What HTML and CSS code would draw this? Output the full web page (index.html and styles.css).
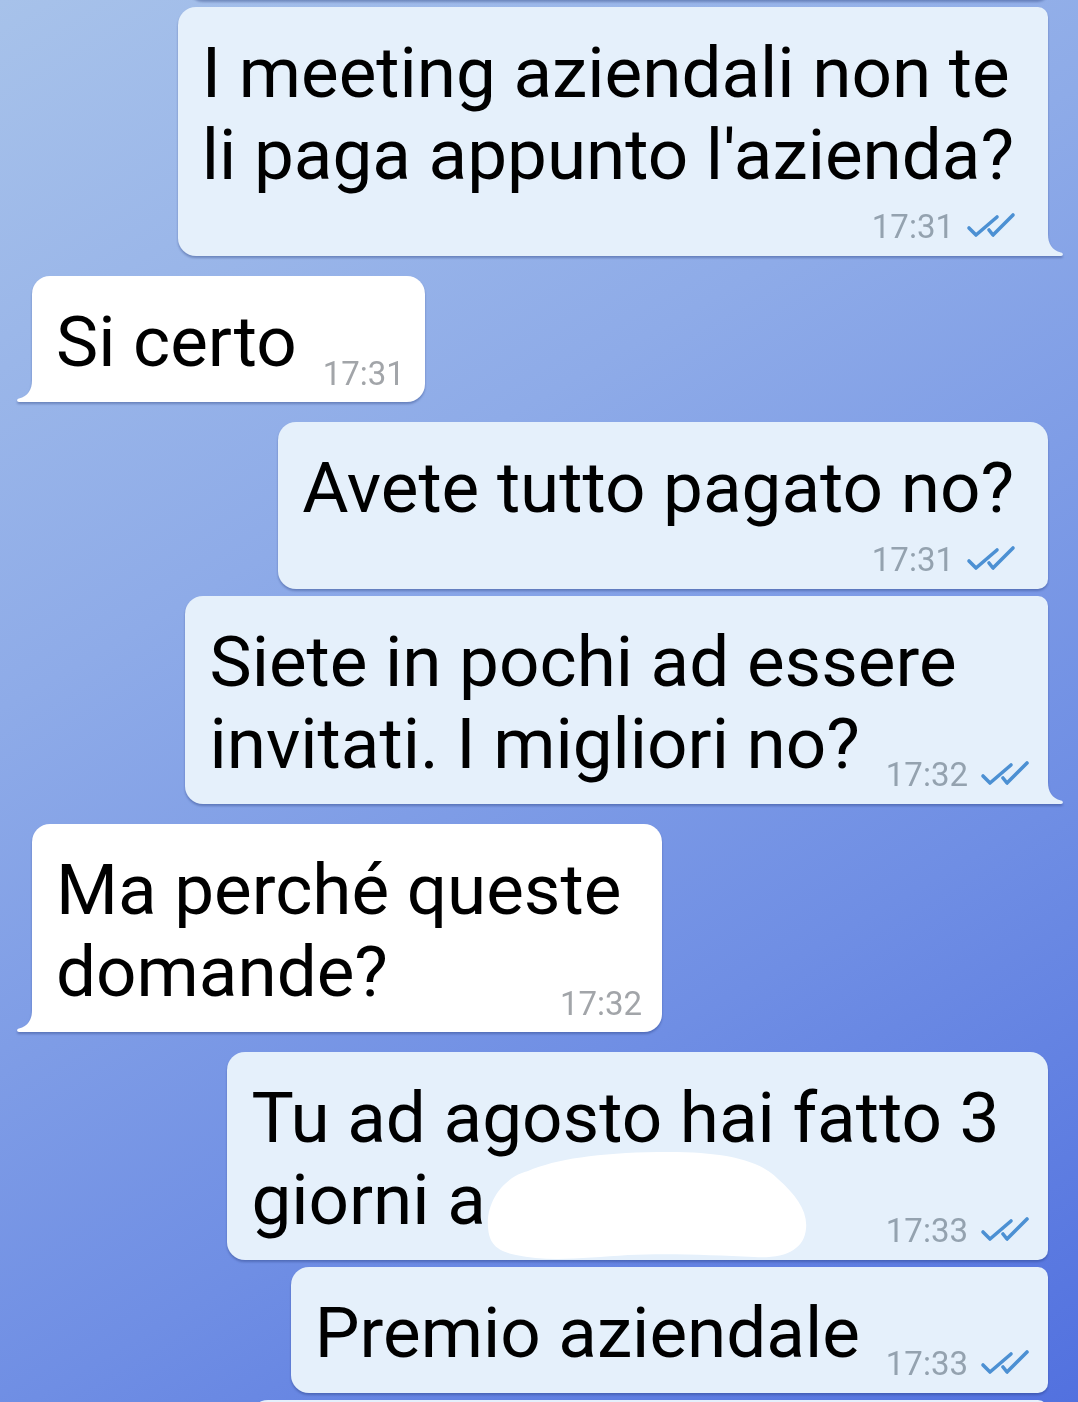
FILE: index.html
```html
<!DOCTYPE html>
<html lang="it">
<head>
    <meta charset="UTF-8">
    <meta name="viewport" content="width=device-width, initial-scale=1.0">
    <title>Chat</title>
    <link rel="stylesheet" href="styles.css">
</head>
<body>
    <div class="chat">
        <!-- messaggio precedente, tagliato in alto -->
        <div class="msg out first">
            <div class="bubble stub-top join-bottom"></div>
        </div>

        <div class="msg out cont">
            <div class="bubble meta-below join-top tail">
                <div class="line">I meeting aziendali non te</div>
                <div class="line">li paga appunto l'azienda?</div>
                <div class="meta-row">
                    <span class="meta"><span class="time">17:31</span><svg class="checks" viewBox="0 0 50 30" width="50" height="30"><path d="M3 20 L10 27 L31 9"/><path d="M23 22 L27 27 L47 7"/></svg></span>
                </div>
                <svg class="tail-shape" viewBox="-2 0 18 22" width="18" height="22"><path d="M-2 0 L0 0 C0 10 4 16 13 18.6 C15.6 19.3 15.4 22 13 22 L-2 22 Z"/></svg>
            </div>
        </div>

        <div class="msg in">
            <div class="bubble tail">
                <div class="row">
                    <span class="line">Si certo</span>
                    <span class="meta"><span class="time">17:31</span></span>
                </div>
                <svg class="tail-shape" viewBox="-2 0 18 22" width="18" height="22"><path d="M-2 0 L0 0 C0 10 4 16 13 18.6 C15.6 19.3 15.4 22 13 22 L-2 22 Z"/></svg>
            </div>
        </div>

        <div class="msg out">
            <div class="bubble meta-below join-bottom">
                <div class="line">Avete tutto pagato no?</div>
                <div class="meta-row">
                    <span class="meta"><span class="time">17:31</span><svg class="checks" viewBox="0 0 50 30" width="50" height="30"><path d="M3 20 L10 27 L31 9"/><path d="M23 22 L27 27 L47 7"/></svg></span>
                </div>
            </div>
        </div>

        <div class="msg out cont">
            <div class="bubble join-top tail">
                <div class="line">Siete in pochi ad essere</div>
                <div class="row">
                    <span class="line">invitati. I migliori no?</span>
                    <span class="meta"><span class="time">17:32</span><svg class="checks" viewBox="0 0 50 30" width="50" height="30"><path d="M3 20 L10 27 L31 9"/><path d="M23 22 L27 27 L47 7"/></svg></span>
                </div>
                <svg class="tail-shape" viewBox="-2 0 18 22" width="18" height="22"><path d="M-2 0 L0 0 C0 10 4 16 13 18.6 C15.6 19.3 15.4 22 13 22 L-2 22 Z"/></svg>
            </div>
        </div>

        <div class="msg in">
            <div class="bubble tail wide">
                <div class="line">Ma perché queste</div>
                <div class="row">
                    <span class="line">domande?</span>
                    <span class="meta"><span class="time">17:32</span></span>
                </div>
                <svg class="tail-shape" viewBox="-2 0 18 22" width="18" height="22"><path d="M-2 0 L0 0 C0 10 4 16 13 18.6 C15.6 19.3 15.4 22 13 22 L-2 22 Z"/></svg>
            </div>
        </div>

        <div class="msg out">
            <div class="bubble join-bottom">
                <div class="line">Tu ad agosto hai fatto 3</div>
                <div class="row">
                    <span class="line">giorni a<svg class="blob" viewBox="0 0 322 112" width="322" height="112"><path d="M2 78 C0 52 18 28 42 22 C70 10 112 4 172 3 C232 2 272 9 292 30 C310 46 322 62 320 80 C318 100 300 110 268 108 C228 106 182 104 142 106 C100 109 60 113 30 106 C10 102 3 94 2 78 Z"/></svg></span>
                    <span class="meta"><span class="time">17:33</span><svg class="checks" viewBox="0 0 50 30" width="50" height="30"><path d="M3 20 L10 27 L31 9"/><path d="M23 22 L27 27 L47 7"/></svg></span>
                </div>
            </div>
        </div>

        <div class="msg out cont">
            <div class="bubble join-top join-bottom">
                <div class="row">
                    <span class="line">Premio aziendale</span>
                    <span class="meta"><span class="time">17:33</span><svg class="checks" viewBox="0 0 50 30" width="50" height="30"><path d="M3 20 L10 27 L31 9"/><path d="M23 22 L27 27 L47 7"/></svg></span>
                </div>
            </div>
        </div>

        <!-- messaggio successivo, tagliato in basso -->
        <div class="msg out cont">
            <div class="bubble stub-bottom join-top"></div>
        </div>
    </div>
</body>
</html>
```

FILE: styles.css
```css
html, body {
    margin: 0;
    padding: 0;
    height: 100%;
    overflow: hidden;
}
body {
    font-family: Roboto, "Noto Sans", Arial, sans-serif;
    background: linear-gradient(150deg, #a7c2ea 0%, #8eabe8 35%, #6f8ee4 70%, #5271df 100%);
    color: #000;
}
.chat {
    display: flex;
    flex-direction: column;
    padding: 0 30px 0 32px;
}
.msg {
    display: flex;
    margin-top: 20px;
}
.msg.cont {
    margin-top: 7px;
}
.msg.first {
    margin-top: -40px;
}
.msg.out {
    justify-content: flex-end;
}
.msg.in {
    justify-content: flex-start;
}

.bubble {
    position: relative;
    padding: 25px 20px 10px 24px;
    border-radius: 18px;
    background: #e5f0fb;
    filter: drop-shadow(0 2px 1px rgba(25, 45, 110, 0.35));
}
.in .bubble {
    background: #fff;
}
.bubble.meta-below {
    padding-right: 34px;
}
.bubble.wide .row {
    gap: 172px;
}
.out .bubble.join-top {
    border-top-right-radius: 10px;
}
.out .bubble.join-bottom {
    border-bottom-right-radius: 10px;
}
.out .bubble.tail {
    border-bottom-right-radius: 0;
}
.in .bubble.tail {
    border-bottom-left-radius: 0;
}

.stub-top {
    width: 862px;
    height: 40px;
    padding: 0;
}
.stub-bottom {
    width: 798px;
    height: 60px;
    padding: 0;
}

.line {
    font-size: 71px;
    line-height: 82px;
    white-space: nowrap;
}
.row {
    display: flex;
    align-items: flex-end;
    justify-content: space-between;
    gap: 26px;
}
.row .line {
    padding-bottom: 9px;
}
.meta-row {
    display: flex;
    justify-content: flex-end;
    margin-top: 12px;
}
.meta {
    display: flex;
    align-items: center;
    gap: 12px;
    font-size: 33px;
    line-height: 36px;
    color: #94a2af;
    white-space: nowrap;
}
.in .meta {
    color: #a2a5a9;
}
.checks {
    margin-bottom: 8px;
    margin-right: -2px;
    fill: none;
    stroke: #4c90d3;
    stroke-width: 3.6;
    stroke-linecap: round;
    stroke-linejoin: round;
}

.tail-shape {
    position: absolute;
    bottom: 0;
    fill: #e5f0fb;
}
.out .tail-shape {
    right: -16px;
}
.in .tail-shape {
    left: -16px;
    transform: scaleX(-1);
    fill: #fff;
}

.blob {
    margin: -60px 52px -37px 0;
    fill: #fff;
    vertical-align: baseline;
}
```
